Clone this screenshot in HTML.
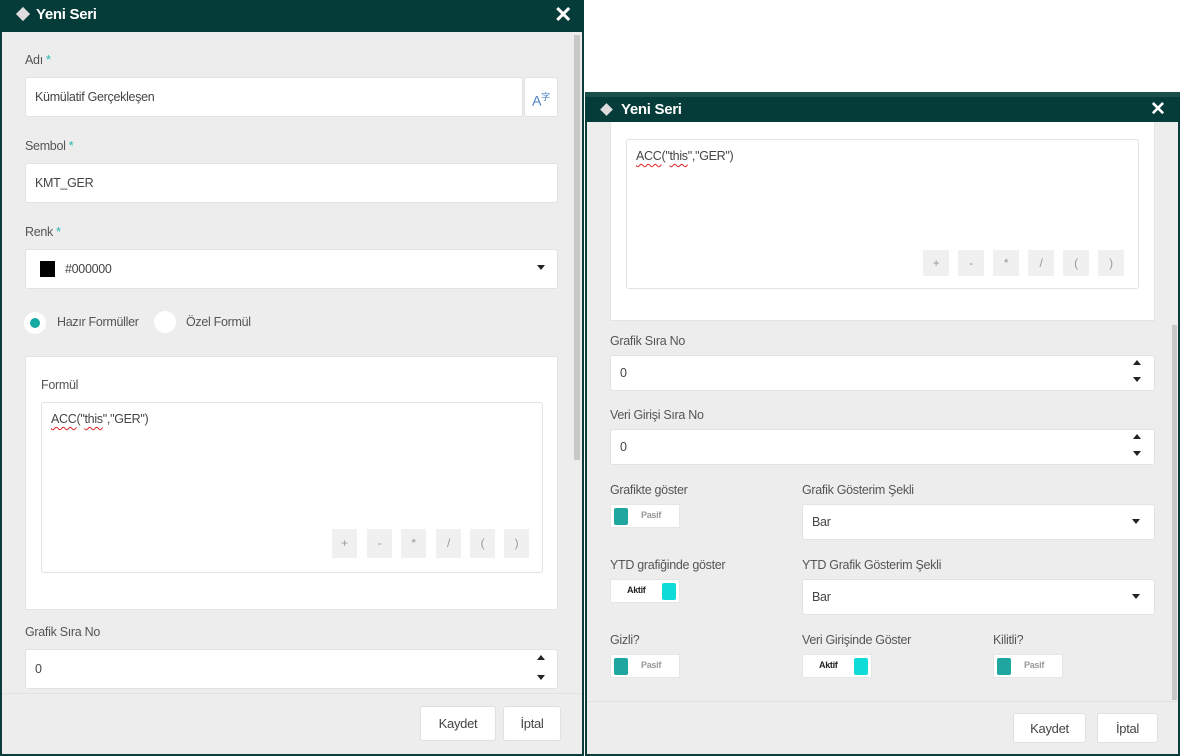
<!DOCTYPE html>
<html><head><meta charset="utf-8">
<style>
*{box-sizing:border-box;margin:0;padding:0}
body{width:1180px;height:756px;position:relative;overflow:hidden;background:#fff;font-family:"Liberation Sans",sans-serif;color:#444;font-size:12.5px;letter-spacing:-0.3px}
.a{position:absolute}
.dlg{background:#ededed}
.bar{background:#053b39;color:#fff;font-weight:bold;font-size:15px}
.in{position:absolute;background:#fff;border:1px solid #e2e2e2;border-radius:3px}
.lbl{position:absolute;color:#555;font-size:12.5px}
.req{color:#22b8b0}
.txt{position:absolute;color:#444;font-size:12.5px}
.btn{position:absolute;background:#f0f0f0;color:#999;font-size:12px;text-align:center;line-height:26px}
.caret{position:absolute;width:0;height:0;border-left:4px solid transparent;border-right:4px solid transparent;border-top:5px solid #222}
.up{position:absolute;width:0;height:0;border-left:4px solid transparent;border-right:4px solid transparent;border-bottom:5px solid #222}
.dn{position:absolute;width:0;height:0;border-left:4px solid transparent;border-right:4px solid transparent;border-top:5px solid #222}
.tg{position:absolute;background:#fff;border:1px solid #e6e6e6;width:70px;height:24px}
.kp{position:absolute;left:3px;top:3px;width:14px;height:17px;background:#1fa79f;border-radius:2px}
.ka{position:absolute;right:3px;top:3px;width:14px;height:17px;background:#0fdcd8;border-radius:2px}
.tp{position:absolute;left:30px;top:5px;font-size:9px;color:#999;font-weight:bold}
.ta{position:absolute;left:16px;top:5px;font-size:9px;color:#222;font-weight:bold}
.fb{position:absolute;background:#fff;border:1px solid #e0e0e0;border-radius:3px;color:#444;font-size:13px;text-align:center}
.sq{text-decoration:underline wavy #d22;text-underline-offset:3px;text-decoration-thickness:1px}
</style></head><body>

<!-- LEFT DIALOG -->
<div class="a dlg" style="left:0;top:0;width:584px;height:756px;border:2px solid #0d3d3a"></div>
<div class="a bar" style="left:0;top:0;width:584px;height:32px"></div>
<div class="a" style="left:18px;top:9px;width:10px;height:10px;background:#ddd;transform:rotate(45deg)"></div>
<div class="a" style="left:36px;top:6px;color:#fff;font-weight:bold;font-size:15px">Yeni Seri</div>
<div class="a" style="left:554px;top:2px;color:#fff;font-weight:bold;font-size:22px">✕</div>
<div class="a" style="left:574px;top:35px;width:6px;height:425px;background:#c8c8c8"></div>

<div class="lbl" style="left:25px;top:53px">Adı <span class="req">*</span></div>
<div class="in" style="left:25px;top:77px;width:498px;height:40px"></div>
<div class="txt" style="left:35px;top:90px">Kümülatif Gerçekleşen</div>
<div class="in" style="left:524px;top:77px;width:34px;height:40px;color:#4a7fc0;font-size:14px;text-align:center;line-height:38px">A<sup style="font-size:9px">字</sup></div>

<div class="lbl" style="left:25px;top:139px">Sembol <span class="req">*</span></div>
<div class="in" style="left:25px;top:163px;width:533px;height:40px"></div>
<div class="txt" style="left:35px;top:176px">KMT_GER</div>

<div class="lbl" style="left:25px;top:225px">Renk <span class="req">*</span></div>
<div class="in" style="left:25px;top:249px;width:533px;height:40px"></div>
<div class="a" style="left:40px;top:261px;width:15px;height:16px;background:#000"></div>
<div class="txt" style="left:65px;top:262px">#000000</div>
<div class="caret" style="left:537px;top:265px"></div>

<div class="a" style="left:24px;top:312px;width:22px;height:22px;border-radius:50%;background:#fff"></div>
<div class="a" style="left:30px;top:318px;width:10px;height:10px;border-radius:50%;background:#15aaa2"></div>
<div class="txt" style="left:57px;top:315px;color:#555">Hazır Formüller</div>
<div class="a" style="left:154px;top:311px;width:22px;height:22px;border-radius:50%;background:#fff"></div>
<div class="txt" style="left:186px;top:315px;color:#555">Özel Formül</div>

<div class="a" style="left:25px;top:356px;width:533px;height:254px;background:#fff;border:1px solid #e4e4e4"></div>
<div class="lbl" style="left:41px;top:378px">Formül</div>
<div class="in" style="left:41px;top:402px;width:502px;height:171px"></div>
<div class="txt" style="left:51px;top:412px"><span class="sq">ACC</span>("<span class="sq">this</span>","GER")</div>
<div class="btn" style="left:332px;top:529px;width:25px;height:29px;line-height:29px">+</div>
<div class="btn" style="left:367px;top:529px;width:25px;height:29px;line-height:29px">-</div>
<div class="btn" style="left:401px;top:529px;width:25px;height:29px;line-height:29px">*</div>
<div class="btn" style="left:436px;top:529px;width:25px;height:29px;line-height:29px">/</div>
<div class="btn" style="left:470px;top:529px;width:25px;height:29px;line-height:29px">(</div>
<div class="btn" style="left:504px;top:529px;width:25px;height:29px;line-height:29px">)</div>

<div class="lbl" style="left:25px;top:625px">Grafik Sıra No</div>
<div class="in" style="left:25px;top:649px;width:533px;height:40px"></div>
<div class="txt" style="left:35px;top:662px">0</div>
<div class="up" style="left:537px;top:655px"></div>
<div class="dn" style="left:537px;top:675px"></div>

<div class="a" style="left:2px;top:693px;width:580px;height:1px;background:#e2e2e2"></div>
<div class="fb" style="left:420px;top:706px;width:76px;height:35px;line-height:34px">Kaydet</div>
<div class="fb" style="left:503px;top:706px;width:58px;height:35px;line-height:34px">İptal</div>

<!-- RIGHT DIALOG -->
<div class="a" style="left:585px;top:92px;width:595px;height:6px;background:#1b4f4c"></div>
<div class="a dlg" style="left:585px;top:97px;width:595px;height:659px;border:2px solid #0d3d3a"></div>
<div class="a bar" style="left:585px;top:97px;width:595px;height:25px"></div>
<div class="a" style="left:602px;top:105px;width:9px;height:9px;background:#ddd;transform:rotate(45deg)"></div>
<div class="a" style="left:621px;top:101px;color:#fff;font-weight:bold;font-size:15px">Yeni Seri</div>
<div class="a" style="left:1150px;top:98px;color:#fff;font-weight:bold;font-size:19px">✕</div>
<div class="a" style="left:1172px;top:325px;width:5px;height:375px;background:#c8c8c8"></div>

<div class="a" style="left:610px;top:122px;width:545px;height:199px;background:#fff;border:1px solid #e4e4e4;border-top:none"></div>
<div class="in" style="left:626px;top:139px;width:513px;height:150px"></div>
<div class="txt" style="left:636px;top:149px"><span class="sq">ACC</span>("<span class="sq">this</span>","GER")</div>
<div class="btn" style="left:923px;top:250px;width:26px">+</div>
<div class="btn" style="left:958px;top:250px;width:26px">-</div>
<div class="btn" style="left:993px;top:250px;width:26px">*</div>
<div class="btn" style="left:1028px;top:250px;width:26px">/</div>
<div class="btn" style="left:1063px;top:250px;width:26px">(</div>
<div class="btn" style="left:1098px;top:250px;width:26px">)</div>

<div class="lbl" style="left:610px;top:334px">Grafik Sıra No</div>
<div class="in" style="left:610px;top:355px;width:545px;height:36px"></div>
<div class="txt" style="left:620px;top:366px">0</div>
<div class="up" style="left:1133px;top:360px"></div>
<div class="dn" style="left:1133px;top:377px"></div>

<div class="lbl" style="left:610px;top:408px">Veri Girişi Sıra No</div>
<div class="in" style="left:610px;top:429px;width:545px;height:36px"></div>
<div class="txt" style="left:620px;top:440px">0</div>
<div class="up" style="left:1133px;top:434px"></div>
<div class="dn" style="left:1133px;top:451px"></div>

<div class="lbl" style="left:610px;top:483px">Grafikte göster</div>
<div class="tg" style="left:610px;top:504px"><div class="kp"></div><div class="tp">Pasif</div></div>
<div class="lbl" style="left:802px;top:483px">Grafik Gösterim Şekli</div>
<div class="in" style="left:802px;top:504px;width:353px;height:36px"></div>
<div class="txt" style="left:812px;top:515px">Bar</div>
<div class="caret" style="left:1132px;top:519px"></div>

<div class="lbl" style="left:610px;top:558px">YTD grafiğinde göster</div>
<div class="tg" style="left:610px;top:579px"><div class="ta">Aktif</div><div class="ka"></div></div>
<div class="lbl" style="left:802px;top:558px">YTD Grafik Gösterim Şekli</div>
<div class="in" style="left:802px;top:579px;width:353px;height:36px"></div>
<div class="txt" style="left:812px;top:590px">Bar</div>
<div class="caret" style="left:1132px;top:594px"></div>

<div class="lbl" style="left:610px;top:633px">Gizli?</div>
<div class="tg" style="left:610px;top:654px"><div class="kp"></div><div class="tp">Pasif</div></div>
<div class="lbl" style="left:802px;top:633px">Veri Girişinde Göster</div>
<div class="tg" style="left:802px;top:654px"><div class="ta">Aktif</div><div class="ka"></div></div>
<div class="lbl" style="left:993px;top:633px">Kilitli?</div>
<div class="tg" style="left:993px;top:654px"><div class="kp"></div><div class="tp">Pasif</div></div>

<div class="a" style="left:587px;top:701px;width:591px;height:1px;background:#e2e2e2"></div>
<div class="fb" style="left:1013px;top:713px;width:73px;height:30px;line-height:29px">Kaydet</div>
<div class="fb" style="left:1097px;top:713px;width:61px;height:30px;line-height:29px">İptal</div>
</body></html>
